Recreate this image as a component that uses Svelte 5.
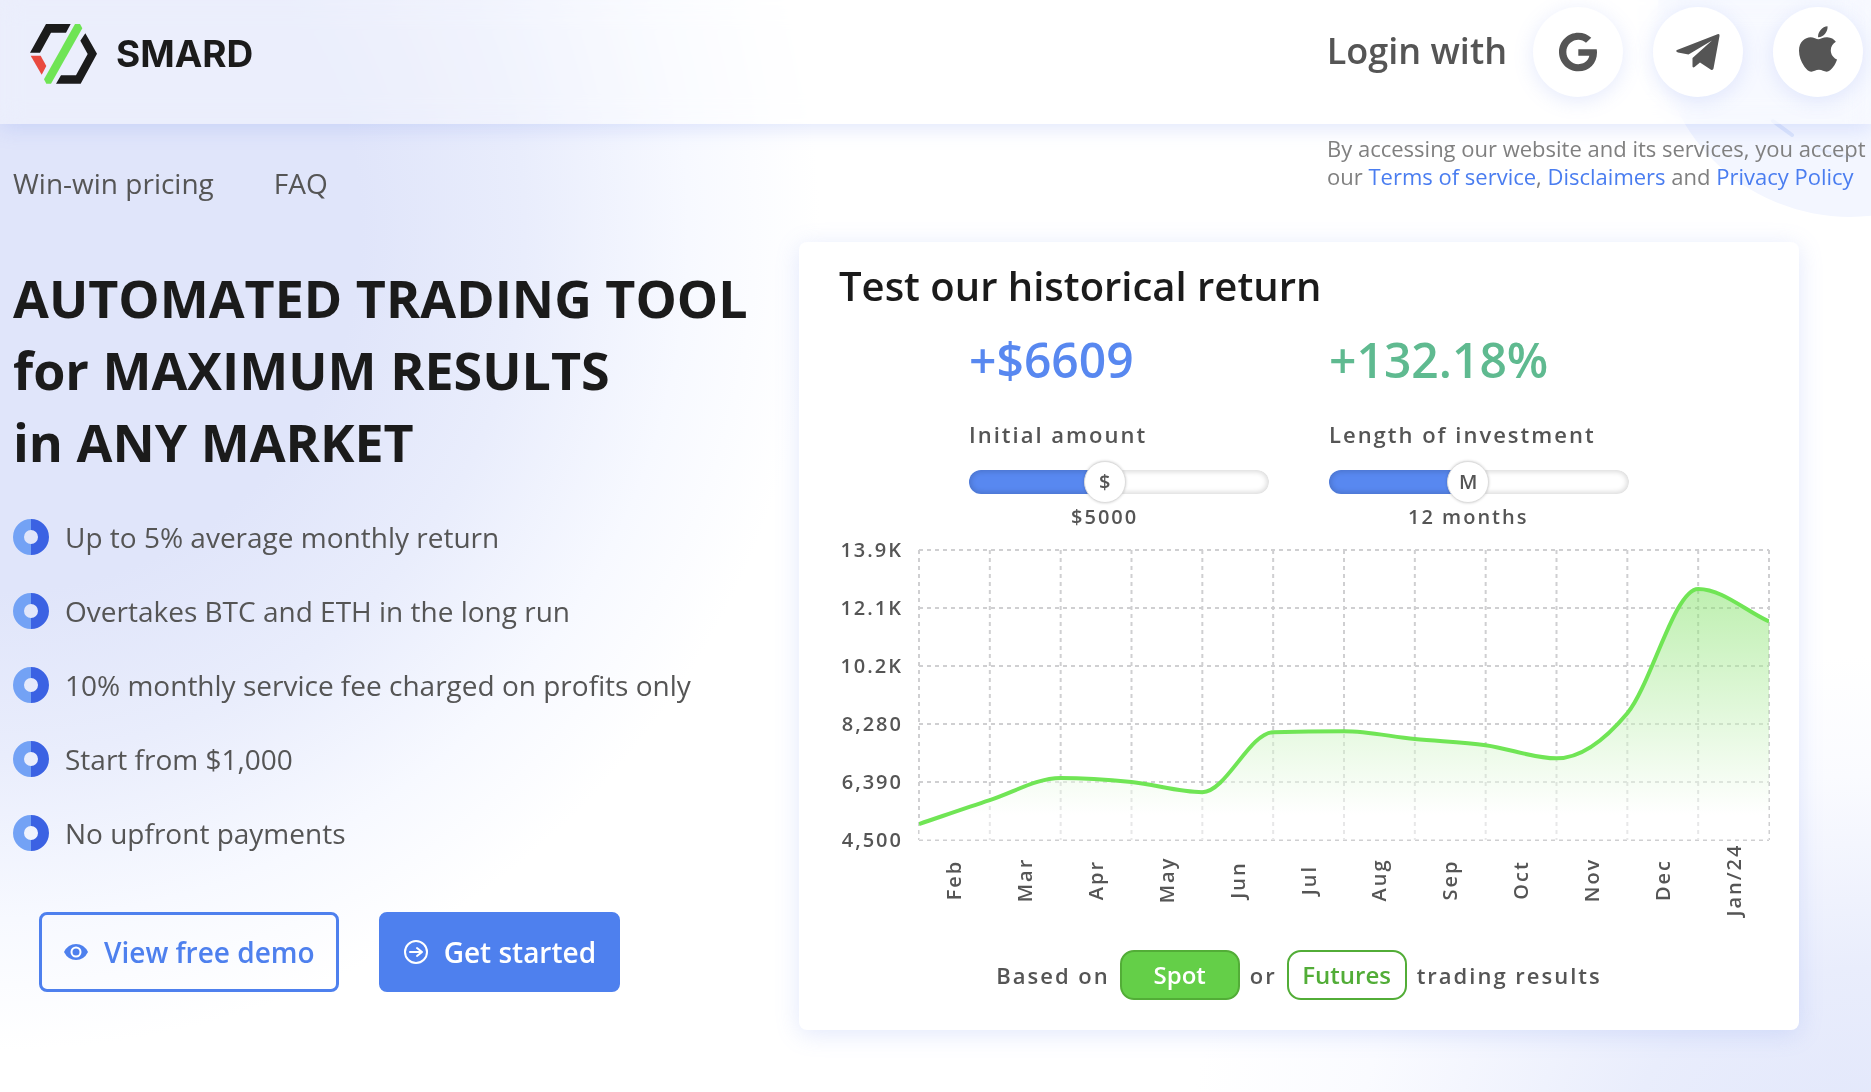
<script>
  const features = [
    'Up to 5% average monthly return',
    'Overtakes BTC and ETH in the long run',
    '10% monthly service fee charged on profits only',
    'Start from $1,000',
    'No upfront payments'
  ];

  let amount = $state(5000);
  let months = $state(12);
  let market = $state('spot');

  const amountShare = $derived((amount - 1000) / 9000);
  const monthShare = $derived((months - 1) / 24);

  // Chart geometry, in viewBox units
  const left = 80;
  const right = 930;
  const top = 19;
  const bottom = 309;
  const yLabels = ['13.9K', '12.1K', '10.2K', '8,280', '6,390', '4,500'];
  const xLabels = ['Feb', 'Mar', 'Apr', 'May', 'Jun', 'Jul', 'Aug', 'Sep', 'Oct', 'Nov', 'Dec', 'Jan/24'];
  const values = [5020, 5800, 6520, 6390, 6060, 8015, 8045, 7790, 7590, 7160, 8630, 12680, 11620];
  const stepX = (right - left) / xLabels.length;
  const stepY = (bottom - top) / (yLabels.length - 1);

  const points = values.map((v, i) => [left + i * stepX, bottom - ((v - 4500) / 9450) * (bottom - top)]);

  // Monotone cubic interpolation through the points
  function smooth(p) {
    const n = p.length;
    const slope = [];
    for (let i = 0; i < n - 1; i++) slope.push((p[i + 1][1] - p[i][1]) / (p[i + 1][0] - p[i][0]));
    const t = [slope[0]];
    for (let i = 1; i < n - 1; i++) {
      const a = slope[i - 1];
      const b = slope[i];
      t.push(a * b <= 0 ? 0 : Math.sign(a) * Math.min(Math.abs(a), Math.abs(b), Math.abs(a + b) / 4) * 2);
    }
    t.push(slope[n - 2]);
    let d = `M${p[0][0]},${p[0][1]}`;
    for (let i = 0; i < n - 1; i++) {
      const h = (p[i + 1][0] - p[i][0]) / 3;
      d += `C${p[i][0] + h},${p[i][1] + t[i] * h} ${p[i + 1][0] - h},${p[i + 1][1] - t[i + 1] * h} ${p[i + 1][0]},${p[i + 1][1]}`;
    }
    return d;
  }

  const line = smooth(points);
  const area = `${line}L${right},${bottom}L${left},${bottom}Z`;
</script>

<div class="page">
  <svg class="orb" viewBox="0 0 386 386" aria-hidden="true">
    <circle cx="193" cy="193" r="193" fill="#f3f6ff" />
    <path d="M116 290l19 14" stroke="#dce5fc" stroke-width="4" stroke-linecap="round" />
    <path d="M160 317q18 8 36 9" fill="none" stroke="#e6edfe" stroke-width="3" stroke-linecap="round" />
  </svg>

  <header>
    <a class="brand" href="#home">
      <svg viewBox="0 0 201 180" width="67" height="60" aria-hidden="true">
        <path fill="#1b1b1b" d="M48 0h74l-14 26H63L30 86H0zM166 28l35 61-49 90H78l15-25h45l35-64-22-40z" />
        <path fill="#e9493f" d="M2 95h30l17 31-14 26z" />
        <path fill="#6fe455" d="M135 0h15l7 13L63 179H49l-7-13z" />
      </svg>
      <span>SMARD</span>
    </a>
    <div class="login">
      <span class="login-title">Login with</span>
      <div class="providers">
        <button type="button" aria-label="Google">
          <svg viewBox="0 0 488 512" width="38" height="40" aria-hidden="true"><path d="M488 261.8C488 403.3 391.1 504 248 504 110.8 504 0 393.2 0 256S110.8 8 248 8c66.8 0 123 24.5 166.3 64.900l-67.5 64.900C258.5 52.600 94.300 116.600 94.300 256c0 86.500 69.100 156.600 153.700 156.600 98.200 0 135-70.400 140.800-106.900H248v-85.300h236.100c2.300 12.700 3.900 24.900 3.900 41.400z" /></svg>
        </button>
        <button type="button" aria-label="Telegram">
          <svg viewBox="0 0 44 36" width="44" height="36" aria-hidden="true"><path d="M41.500.2Q43.800-.3 43.500 2L37.500 34.500Q37 36.500 35 35.700L24 28.500 18.500 33Q17 34.200 16.500 32.500V24L36 6.500 12.500 20.500 2 18.500Q-1 17.300 1 16z" /></svg>
        </button>
        <button type="button" aria-label="Apple">
          <svg class="apple" viewBox="4 32 376 448" width="38" height="46" aria-hidden="true"><path d="M318.700 268.700c-.2-36.700 16.400-64.400 50-84.800-18.800-26.900-47.200-41.700-84.700-44.600-35.500-2.800-74.300 20.700-88.500 20.700-15 0-49.400-19.700-76.400-19.700C63.300 141.200 4 184.800 4 273.500q0 39.300 14.400 81.200c12.800 36.700 59 126.700 107.200 125.200 25.200-.6 43-17.900 75.800-17.900 31.800 0 48.300 17.900 76.400 17.900 48.600-.7 90.400-82.500 102.600-119.300-65.200-30.700-61.700-90-61.700-91.900zm-56.600-164.200c27.300-32.400 24.800-61.900 24-72.500-24.100 1.400-52 16.400-67.900 34.900-17.500 19.800-27.800 44.300-25.600 71.900 26.100 2 49.900-11.400 69.500-34.300z" /></svg>
        </button>
      </div>
    </div>
  </header>

  <div class="subbar">
    <nav>
      <a href="#pricing">Win-win pricing</a>
      <a href="#faq">FAQ</a>
    </nav>
    <p class="legal">
      By accessing our website and its services, you accept our <a href="#terms">Terms of service</a>, <a href="#disclaimers">Disclaimers</a> and <a href="#privacy">Privacy Policy</a>
    </p>
  </div>

  <main>
    <section class="intro">
      <h1>AUTOMATED TRADING TOOL<br />for MAXIMUM RESULTS<br />in ANY MARKET</h1>
      <ul>
        {#each features as feature}
          <li>
            <svg viewBox="0 0 36 36" width="36" height="36" aria-hidden="true">
              <path fill="#73a2f5" d="M18 0a18 18 0 0 0 0 36v-11a7 7 0 0 1 0-14z" />
              <path fill="#3b62e3" d="M18 0a18 18 0 0 1 0 36v-11a7 7 0 0 0 0-14z" />
            </svg>
            <span>{feature}</span>
          </li>
        {/each}
      </ul>
      <div class="actions">
        <button type="button" class="cta outline">
          <svg viewBox="0 0 24 18" width="24" height="18" aria-hidden="true">
            <path fill="#4e80ee" d="M0 9Q4 1 12 1t12 8q-4 8-12 8T0 9z" />
            <circle cx="12" cy="9" r="4.500" fill="#4e80ee" stroke="#fff" stroke-width="2" />
          </svg>
          View free demo
        </button>
        <button type="button" class="cta solid">
          <svg viewBox="0 0 24 24" width="24" height="24" fill="none" stroke="#fff" stroke-width="2" stroke-linecap="round" stroke-linejoin="round" aria-hidden="true">
            <circle cx="12" cy="12" r="11" />
            <path d="M6 12h12M13 8l5 4-5 4" />
          </svg>
          Get started
        </button>
      </div>
    </section>

    <section class="card">
      <h2>Test our historical return</h2>
      <div class="stats">
        <div class="stat">
          <strong class="gain">+$6609</strong>
          <label for="amount">Initial amount</label>
          <div class="slider" style="--share: {amountShare}">
            <input id="amount" type="range" min="1000" max="10000" step="500" bind:value={amount} />
            <span class="mark" aria-hidden="true">$</span>
          </div>
          <output for="amount" style="--share: {amountShare}">${amount}</output>
        </div>
        <div class="stat">
          <strong class="rate">+132.18%</strong>
          <label for="length">Length of investment</label>
          <div class="slider" style="--share: {monthShare}">
            <input id="length" type="range" min="1" max="25" bind:value={months} />
            <span class="mark" aria-hidden="true">M</span>
          </div>
          <output for="length" style="--share: {monthShare}">{months} months</output>
        </div>
      </div>

      <svg class="chart" viewBox="0 0 930 401" role="img" aria-label="Balance by month">
        <defs>
          <linearGradient id="fade" x1="0" y1="0" x2="0" y2="1">
            <stop offset="0" stop-color="#7ee062" stop-opacity="0.5" />
            <stop offset="0.9" stop-color="#fff" stop-opacity="0.5" />
            <stop offset="1" stop-color="#fff" stop-opacity="0.5" />
          </linearGradient>
          <clipPath id="plot"><rect x={left} y={top} width={right - left} height={bottom - top} /></clipPath>
        </defs>
        <g class="grid">
          {#each yLabels as _, i}
            <line x1={left} x2={right} y1={top + i * stepY} y2={top + i * stepY} />
          {/each}
          {#each values as _, i}
            <line x1={left + i * stepX} x2={left + i * stepX} y1={top} y2={bottom} />
          {/each}
        </g>
        <g clip-path="url(#plot)">
          <path d={area} fill="url(#fade)" />
          <path d={line} fill="none" stroke="#70e555" stroke-width="4" />
        </g>
        <g class="y-labels">
          {#each yLabels as label, i}
            <text x="64" y={top + i * stepY + 7}>{label}</text>
          {/each}
        </g>
        <g class="x-labels">
          {#each xLabels as label, i}
            <text transform="translate({left + (i + 0.5) * stepX + 7} 349) rotate(-90)">{label}</text>
          {/each}
        </g>
      </svg>

      <div class="basis">
        <span>Based on</span>
        <button type="button" class:active={market === 'spot'} onclick={() => (market = 'spot')}>Spot</button>
        <span>or</span>
        <button type="button" class:active={market === 'futures'} onclick={() => (market = 'futures')}>Futures</button>
        <span>trading results</span>
      </div>
    </section>
  </main>
</div>

<style>
  :global(body) {
    margin: 0;
  }

  .page {
    position: relative;
    overflow: hidden;
    min-height: 100vh;
    box-sizing: border-box;
    font-family: 'Open Sans', 'Noto Sans', sans-serif;
    color: #555;
    background:
      radial-gradient(ellipse 680px 480px at 100% 104%, #e2e7fb 0%, #e9edfc 35%, #fafbff 75%, transparent 100%),
      radial-gradient(ellipse 820px 820px at 0 230px, #e0e5fa 0%, #e0e5fa 44%, #e9edfc 64%, #f7f9ff 84%, transparent 100%),
      #fff;
  }

  a {
    color: inherit;
    text-decoration: none;
  }

  button {
    font: inherit;
    cursor: pointer;
  }

  .orb {
    position: absolute;
    top: -169px;
    right: -172px;
    width: 386px;
    height: 386px;
  }

  header {
    position: relative;
    display: flex;
    justify-content: space-between;
    box-sizing: border-box;
    height: 124px;
    padding: 7px 8px 0 30px;
    background: rgba(255, 255, 255, 0.35);
    box-shadow: 0 4px 20px rgba(112, 140, 240, 0.22);
    backdrop-filter: blur(12px);
  }

  .brand {
    display: flex;
    align-items: center;
    gap: 19px;
    height: 94px;
    font: 700 37px/44px Inter, sans-serif;
    color: #1b1b1b;
  }

  .login {
    display: flex;
    gap: 26px;
    height: 90px;
  }

  .providers {
    display: flex;
    gap: 30px;
  }

  .login-title {
    align-self: center;
    font-size: 36px;
    font-weight: 600;
    line-height: 50px;
    padding-bottom: 3px;
  }

  .login button {
    display: grid;
    place-items: center;
    width: 90px;
    height: 90px;
    padding: 0;
    border: 0;
    border-radius: 50%;
    background: #fff;
    box-shadow: 0 4px 20px rgba(112, 140, 240, 0.18);
  }

  .login svg {
    fill: #555;
  }

  .login .apple {
    margin-bottom: 7px;
  }

  .subbar {
    position: relative;
    display: flex;
    justify-content: space-between;
    min-height: 118px;
  }

  nav {
    display: flex;
    gap: 60px;
    padding: 40px 0 0 13px;
    font-size: 28px;
    line-height: 38px;
  }

  .legal {
    width: 544px;
    margin: 0;
    padding-top: 10px;
    font-size: 22px;
    line-height: 28px;
    color: #808080;
  }

  .legal a {
    color: #4a7df0;
  }

  main {
    position: relative;
    display: flex;
    justify-content: space-between;
    gap: 24px;
    padding: 0 72px 62px 13px;
  }

  .intro {
    padding-top: 20px;
  }

  h1 {
    margin: 0;
    font-size: 52px;
    font-weight: 700;
    line-height: 72px;
    color: #1b1b1b;
    white-space: nowrap;
  }

  ul {
    display: grid;
    gap: 38px;
    margin: 41px 0 0;
    padding: 0;
    list-style: none;
  }

  li {
    display: flex;
    align-items: center;
    gap: 16px;
    height: 36px;
    font-size: 28px;
    line-height: 36px;
  }

  .actions {
    display: flex;
    gap: 40px;
    margin: 61px 0 0 26px;
  }

  .cta {
    display: flex;
    align-items: center;
    gap: 16px;
    height: 80px;
    padding: 0 21px 0 22px;
    border: 3px solid #4e80ee;
    border-radius: 8px;
    font-size: 28px;
    font-weight: 600;
    white-space: nowrap;
  }

  .outline {
    background: transparent;
    color: #4e80ee;
  }

  .solid {
    background: #4e80ee;
    color: #fff;
  }

  .card {
    flex: 0 1 1000px;
    box-sizing: border-box;
    padding: 16px 30px 30px 40px;
    border-radius: 8px;
    background: #fff;
    box-shadow: 0 4px 24px rgba(112, 140, 240, 0.2);
  }

  h2 {
    margin: 0 0 14px;
    font-size: 40px;
    font-weight: 600;
    line-height: 56px;
    color: #1b1b1b;
  }

  .stats {
    display: grid;
    grid-template-columns: 300px 300px;
    justify-content: center;
    gap: 60px;
    padding-right: 10px;
  }

  .stat {
    display: flex;
    flex-direction: column;
  }

  .stat strong {
    font-size: 48px;
    font-weight: 600;
    line-height: 64px;
  }

  .gain {
    color: #5888f0;
  }

  .rate {
    color: #5fba90;
  }

  label {
    margin: 27px 0 12px;
    font-size: 22px;
    font-weight: 600;
    line-height: 30px;
    letter-spacing: 2px;
  }

  .slider {
    position: relative;
    display: flex;
    align-items: center;
    height: 42px;
  }

  input[type='range'] {
    appearance: none;
    width: 100%;
    height: 24px;
    margin: 0;
    border-radius: 12px;
    background: linear-gradient(#5888f0, #5888f0) 0 0 / calc(21px + var(--share) * (100% - 42px)) 100% no-repeat #fff;
    box-shadow: inset 0 0 5px 2px rgba(0, 0, 0, 0.14);
    cursor: pointer;
  }

  input[type='range']::-webkit-slider-thumb {
    appearance: none;
    width: 42px;
    height: 42px;
    border: 1px solid #ddd;
    border-radius: 50%;
    background: #fff;
    box-shadow: 0 0 3px rgba(0, 0, 0, 0.2);
  }

  .mark {
    position: absolute;
    left: calc(21px + var(--share) * (100% - 42px));
    transform: translateX(-50%);
    font-size: 20px;
    font-weight: 600;
    line-height: 28px;
    pointer-events: none;
  }

  output {
    width: fit-content;
    margin-left: calc(21px + var(--share) * (100% - 42px));
    transform: translateX(-50%);
    font-size: 20px;
    font-weight: 600;
    line-height: 28px;
    letter-spacing: 2px;
    white-space: nowrap;
  }

  .chart {
    display: block;
    width: 100%;
    overflow: visible;
  }

  .grid line {
    stroke: #cfcfd1;
    stroke-width: 2;
    stroke-dasharray: 4 4;
  }

  .chart text {
    font-size: 20px;
    font-weight: 600;
    letter-spacing: 2px;
    fill: #555;
  }

  .y-labels text {
    text-anchor: end;
  }

  .x-labels text {
    text-anchor: middle;
  }

  .basis {
    display: flex;
    justify-content: center;
    align-items: center;
    gap: 10px;
    margin-top: 18px;
    padding-right: 10px;
    font-size: 22px;
    font-weight: 600;
    line-height: 30px;
    letter-spacing: 2px;
  }

  .basis button {
    width: 120px;
    height: 50px;
    padding: 0;
    border: 2px solid #52ad37;
    border-radius: 14px;
    background: #fff;
    color: #52ad37;
    font-size: 24px;
    letter-spacing: normal;
  }

  .basis .active {
    background: #64cf48;
    color: #fff;
  }
</style>
